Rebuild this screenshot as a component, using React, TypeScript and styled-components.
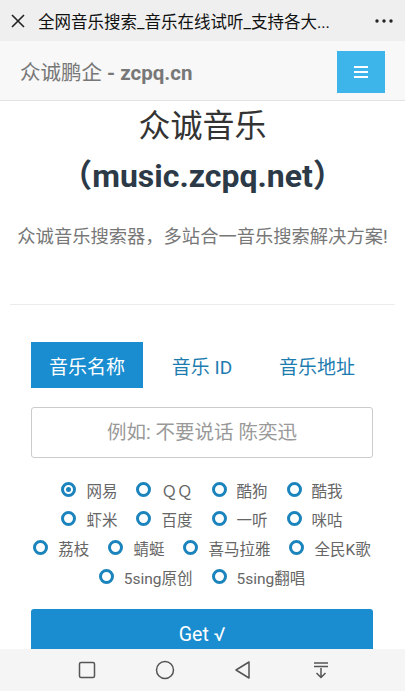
import { useState } from 'react';
import styled, { createGlobalStyle } from 'styled-components';

const GlobalStyle = createGlobalStyle`
  html, body {
    margin: 0;
    padding: 0;
    background: #fff;
    font-family: Roboto, "Noto Sans CJK SC", sans-serif;
  }
  * {
    box-sizing: border-box;
  }
`;

const Page = styled.div`
  width: 405px;
  height: 691px;
  overflow: hidden;
  position: relative;
  background: #fff;
`;

const TitleBar = styled.div`
  height: 41px;
  background: #efefef;
  display: flex;
  align-items: center;
  padding: 0 12px 0 11px;
`;

const CloseIcon = styled.svg`
  width: 14px;
  height: 14px;
  flex-shrink: 0;
`;

const PageTitle = styled.div`
  flex: 1;
  margin-left: 13px;
  font-size: 16.5px;
  color: #111;
  white-space: nowrap;
  overflow: hidden;
`;

const Navbar = styled.header`
  height: 60px;
  background: #f8f8f8;
  border-bottom: 1px solid #e3e3e3;
  display: flex;
  align-items: center;
  justify-content: space-between;
  padding: 0 20px 0 20px;
`;

const Brand = styled.div`
  font-size: 20.5px;
  color: #777;
  padding-top: 1px;

  b {
    font-weight: 700;
  }
`;

const MenuButton = styled.button`
  width: 48px;
  height: 42px;
  border: none;
  background: #3db5ea;
  display: flex;
  flex-direction: column;
  align-items: center;
  justify-content: center;
  gap: 3px;
  padding: 0;
  margin-top: 2px;

  span {
    display: block;
    width: 14px;
    height: 2px;
    background: #fff;
  }
`;

const Hero = styled.section`
  text-align: center;
`;

const HeroTitle = styled.h1`
  margin: 0;
  font-size: 32px;
  line-height: 50px;
  font-weight: 400;
  color: #333;

  span {
    display: block;
  }
`;

const SiteName = styled.span`
  font-weight: 700;
  color: #2c3a48;
  font-size: 32px;
`;

const Lead = styled.p`
  margin: 23px 0 0;
  font-size: 18.3px;
  line-height: 26px;
  color: #777;
  white-space: nowrap;
`;

const Divider = styled.hr`
  margin: 54px 10px 0;
  border: none;
  border-top: 1px solid #ececec;
`;

const Panel = styled.div`
  padding: 37px 32px 0 31px;
`;

const Tabs = styled.div`
  display: flex;
  justify-content: space-between;
`;

const Tab = styled.button<{ $active?: boolean }>`
  height: 46px;
  padding: 0 18px;
  border: none;
  border-radius: 0;
  font-family: inherit;
  font-size: 19px;
  background: ${(p) => (p.$active ? '#198dd0' : 'transparent')};
  color: ${(p) => (p.$active ? '#fff' : '#1c7cb0')};
  cursor: pointer;
`;

const SearchInput = styled.input`
  display: block;
  width: 100%;
  height: 51px;
  margin-top: 19px;
  border: 1px solid #ccc;
  border-radius: 3px;
  font-family: inherit;
  font-size: 19.5px;
  text-align: center;
  color: #555;
  outline: none;

  &::placeholder {
    color: #999;
  }
`;

const Sources = styled.div`
  margin-top: 17px;
`;

const SourceRow = styled.div`
  display: flex;
  justify-content: center;
  align-items: center;
  gap: 19px;
  height: 29px;
`;

const SourceLabel = styled.label`
  display: flex;
  align-items: center;
  flex-shrink: 0;
  white-space: nowrap;
  font-size: 15.5px;
  color: #666;
  cursor: pointer;
`;

const RadioDot = styled.span<{ $checked?: boolean }>`
  flex-shrink: 0;
  width: 15px;
  height: 15px;
  border-radius: 50%;
  border: 3px solid #1c84bd;
  margin-right: 10px;
  display: flex;
  align-items: center;
  justify-content: center;

  &::after {
    content: '';
    width: 5px;
    height: 5px;
    border-radius: 50%;
    background: #1c84bd;
    display: ${(p) => (p.$checked ? 'block' : 'none')};
  }
`;

const GetButton = styled.button`
  display: block;
  width: 100%;
  height: 50px;
  margin-top: 18px;
  border: none;
  border-radius: 3px;
  background: #1a8dd0;
  color: #fff;
  font-family: inherit;
  font-size: 19.5px;
  padding-bottom: 1px;
`;

const SystemBar = styled.nav`
  position: absolute;
  left: 0;
  right: 0;
  bottom: 0;
  height: 42px;
  background: #f5f5f5;
  display: grid;
  grid-template-columns: repeat(4, 78px);
  justify-content: center;
  align-items: center;
  justify-items: center;
  padding-left: 2px;
`;

const SysIcon = styled.svg`
  width: 20px;
  height: 20px;
`;

const sourceRows: string[][] = [
  ['网易', 'ＱＱ', '酷狗', '酷我'],
  ['虾米', '百度', '一听', '咪咕'],
  ['荔枝', '蜻蜓', '喜马拉雅', '全民K歌'],
  ['5sing原创', '5sing翻唱'],
];

const tabs = ['音乐名称', '音乐 ID', '音乐地址'];

const App = () => {
  const [tab, setTab] = useState(0);
  const [source, setSource] = useState('网易');

  return (
    <Page>
      <GlobalStyle />
      <TitleBar>
        <CloseIcon viewBox="0 0 14 14">
          <path d="M1 1 L13 13 M13 1 L1 13" stroke="#222" strokeWidth="1.6" fill="none" />
        </CloseIcon>
        <PageTitle>全网音乐搜索_音乐在线试听_支持各大...</PageTitle>
        <svg width="18" height="4" viewBox="0 0 18 4">
          <circle cx="2" cy="2" r="1.7" fill="#222" />
          <circle cx="9" cy="2" r="1.7" fill="#222" />
          <circle cx="16" cy="2" r="1.7" fill="#222" />
        </svg>
      </TitleBar>

      <Navbar>
        <Brand>
          众诚鹏企 <b>- zcpq.cn</b>
        </Brand>
        <MenuButton aria-label="menu">
          <span />
          <span />
          <span />
        </MenuButton>
      </Navbar>

      <Hero>
        <HeroTitle>
          <span>众诚音乐</span>
          <SiteName>（music.zcpq.net）</SiteName>
        </HeroTitle>
        <Lead>众诚音乐搜索器，多站合一音乐搜索解决方案!</Lead>
      </Hero>

      <Divider />

      <Panel>
        <Tabs>
          {tabs.map((t, i) => (
            <Tab key={t} $active={i === tab} onClick={() => setTab(i)}>
              {t}
            </Tab>
          ))}
        </Tabs>
        <SearchInput placeholder="例如: 不要说话 陈奕迅" />
        <Sources>
          {sourceRows.map((row, i) => (
            <SourceRow key={i}>
              {row.map((name) => (
                <SourceLabel key={name} onClick={() => setSource(name)}>
                  <RadioDot $checked={source === name} />
                  {name}
                </SourceLabel>
              ))}
            </SourceRow>
          ))}
        </Sources>
        <GetButton>Get √</GetButton>
      </Panel>

      <SystemBar>
        <SysIcon viewBox="0 0 20 20">
          <rect x="2.5" y="2.5" width="15" height="15" rx="1.5" stroke="#555" strokeWidth="1.5" fill="none" />
        </SysIcon>
        <SysIcon viewBox="0 0 20 20">
          <circle cx="10" cy="10" r="8.5" stroke="#555" strokeWidth="1.5" fill="none" />
        </SysIcon>
        <SysIcon viewBox="0 0 20 20">
          <path d="M16 2 L16 18 L3 10 Z" stroke="#555" strokeWidth="1.5" strokeLinejoin="round" fill="none" />
        </SysIcon>
        <SysIcon viewBox="0 0 20 20">
          <path d="M3 3 H17 M3 6.5 H17 M10 8 V17.5 M5.5 13 L10 17.5 L14.5 13" stroke="#555" strokeWidth="1.5" fill="none" />
        </SysIcon>
      </SystemBar>
    </Page>
  );
};

export default App;
